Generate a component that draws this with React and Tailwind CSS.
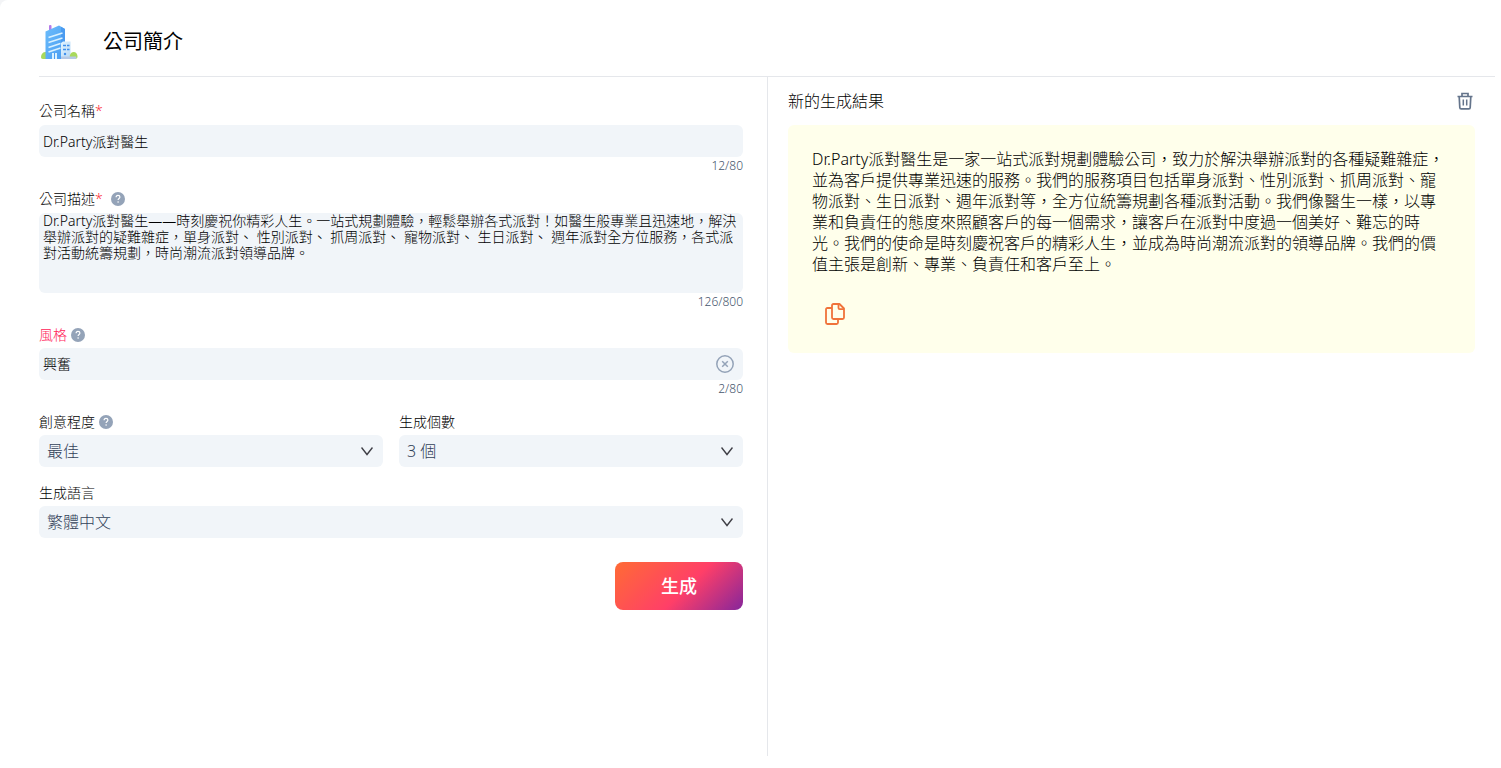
import { useState } from 'react'

const RESULT =
  'Dr.Party派對醫生是一家一站式派對規劃體驗公司，致力於解決舉辦派對的各種疑難雜症，並為客戶提供專業迅速的服務。我們的服務項目包括單身派對、性別派對、抓周派對、寵物派對、生日派對、週年派對等，全方位統籌規劃各種派對活動。我們像醫生一樣，以專業和負責任的態度來照顧客戶的每一個需求，讓客戶在派對中度過一個美好、難忘的時光。我們的使命是時刻慶祝客戶的精彩人生，並成為時尚潮流派對的領導品牌。我們的價值主張是創新、專業、負責任和客戶至上。'

const DESCRIPTION =
  'Dr.Party派對醫生——時刻慶祝你精彩人生。一站式規劃體驗，輕鬆舉辦各式派對！如醫生般專業且迅速地，解決舉辦派對的疑難雜症，單身派對、 性別派對、 抓周派對、 寵物派對、 生日派對、 週年派對全方位服務，各式派對活動統籌規劃，時尚潮流派對領導品牌。'

function BuildingIcon() {
  return (
    <svg width="40" height="40" viewBox="0 0 40 40" aria-hidden="true">
      <defs>
        <linearGradient id="tower" x1="0" y1="0" x2="1" y2="1">
          <stop offset="0" stopColor="#6bbcfb" />
          <stop offset="1" stopColor="#4a9df2" />
        </linearGradient>
        <linearGradient id="annex" x1="0" y1="0" x2="1" y2="1">
          <stop offset="0" stopColor="#e3f4ff" />
          <stop offset="1" stopColor="#b5d7f5" />
        </linearGradient>
      </defs>
      <rect x="10" y="3" width="2.5" height="6" rx="1" fill="#b57be8" />
      <path d="M2 35c0-3 2-5 4.500-5S10 32 10 37H4c-1.500 0-2-1-2-2z" fill="#a9d95b" />
      <path d="M6.500 9.500 20 3.500 26 7v30H6.500z" fill="url(#tower)" />
      <path d="M22 4.700 26 7v30h-4z" fill="#4a9bf0" />
      <path d="M9.500 15.500l14-4.500M9.500 20.500l14-4.500M9.500 25.500l12-4M9.500 30l12-4" stroke="#d9f1ff" strokeWidth="1.600" />
      <path d="M13 37v-6h5v6z" fill="#d9f1ff" />
      <path d="M15.500 31v6" stroke="#4a9df2" />
      <path d="M22 21l2-1.500h7.500V37H22z" fill="url(#annex)" />
      <path d="M24 23.500h3M28 23.500h2.500M24 27.500h3M28 27.500h2.500" stroke="#3f8fec" strokeWidth="1.600" />
      <circle cx="26" cy="32" r="1.200" fill="#3f8fec" />
      <path d="M31 37c-1-4 1-7 3.500-7 2.500 0 4 2 4 4.500 0 1.500-.8 2.500-2.500 2.500z" fill="#a9d95b" />
      <path d="M22 34.500h14.500c1.500 0 1 2.500-.5 2.500H22z" fill="#b5c9e6" />
    </svg>
  )
}

function HelpIcon() {
  return (
    <svg width="14" height="14" viewBox="0 0 14 14" fill="none" aria-hidden="true">
      <circle cx="7" cy="7" r="7" fill="#94a3b8" />
      <path d="M5.100 5.300c0-1.200.8-1.900 1.900-1.900s1.900.7 1.900 1.700c0 1.300-1.800 1.400-1.800 2.900" stroke="#fff" strokeWidth="1.200" />
      <circle cx="7.100" cy="10" r=".8" fill="#fff" />
    </svg>
  )
}

function ClearIcon() {
  return (
    <svg width="18" height="18" viewBox="0 0 18 18" fill="none" stroke="#94a3b8" aria-hidden="true">
      <circle cx="9" cy="9" r="8.200" strokeWidth="1.500" />
      <path d="M6.200 6.200l5.600 5.600M11.800 6.200l-5.600 5.600" strokeWidth="1.500" />
    </svg>
  )
}

function TrashIcon() {
  return (
    <svg width="16" height="18" viewBox="0 0 16 18" fill="none" stroke="#64748b" strokeWidth="1.700" aria-hidden="true">
      <path d="M.5 4.500h15M5 4.500v-3h6v3" />
      <path d="M2.200 4.500l.6 11c0 .9.5 1.400 1.400 1.400h7.600c.9 0 1.400-.5 1.400-1.400l.6-11" />
      <path d="M6.300 7.500v6M9.700 7.500v6" strokeWidth="1.500" />
    </svg>
  )
}

function CopyIcon() {
  return (
    <svg width="20" height="22" viewBox="0 0 20 22" fill="none" stroke="#f0733a" strokeWidth="1.800" strokeLinejoin="round" aria-hidden="true">
      <path d="M14.500 1H8.500C7.500 1 7 1.500 7 2.500v12c0 1 .5 1.500 1.500 1.500h9c1 0 1.500-.5 1.500-1.500v-9z" />
      <path d="M13.500 1v4c0 .8.400 1.200 1.200 1.200H19" />
      <path d="M7 5H2.500C1.500 5 1 5.500 1 6.500v13c0 1 .5 1.500 1.500 1.500h9c1 0 1.500-.5 1.500-1.500V16" />
    </svg>
  )
}

function FieldLabel({ htmlFor, required, help, className = 'h-[23px] text-black', children }) {
  return (
    <div className={`flex items-center gap-1 pb-1 text-sm ${className}`}>
      <label htmlFor={htmlFor}>
        {children}
        {required && <span className="text-red-500">*</span>}
      </label>
      {help && (
        <button type="button" aria-label="說明" className={required ? 'ml-1' : ''}>
          <HelpIcon />
        </button>
      )}
    </div>
  )
}

function Counter({ value, max }) {
  return (
    <p className="h-4 text-right text-xs leading-[18px] text-slate-600">
      {value}/{max}
    </p>
  )
}

function SelectField({ id, label, help, options }) {
  return (
    <div>
      <FieldLabel htmlFor={id} help={help}>{label}</FieldLabel>
      <div className="relative">
        <select id={id} className="block h-8 w-full appearance-none rounded-md bg-slate-100 px-2 text-base text-slate-700">
          {options.map((option) => (
            <option key={option}>{option}</option>
          ))}
        </select>
        <svg className="pointer-events-none absolute top-3 right-[10px]" width="12" height="9" viewBox="0 0 12 9" fill="none" stroke="#3f3f46" strokeWidth="1.400" aria-hidden="true">
          <path d="M.5.500 6 7.500 11.500.500" />
        </svg>
      </div>
    </div>
  )
}

export default function App() {
  const [name, setName] = useState('Dr.Party派對醫生')
  const [description, setDescription] = useState(DESCRIPTION)
  const [style, setStyle] = useState('興奮')

  return (
    <div className="bg-gray-100 font-['Noto_Sans','Noto_Sans_CJK_TC',sans-serif]" lang="zh-Hant">
      <div className="flex min-h-screen flex-col rounded-tl-lg bg-white pr-[6px] pb-3 pl-[39px] font-light">
        <header className="flex h-[77px] items-center gap-6 border-b border-gray-200 pt-2 text-black">
          <BuildingIcon />
          <h1 className="text-xl font-normal">公司簡介</h1>
        </header>

        <main className="grid flex-1 grid-cols-2">
          {/* Form */}
          <form className="flex flex-col gap-4 pt-6 pr-6" onSubmit={(e) => e.preventDefault()}>
            <div>
              <FieldLabel htmlFor="name" required className="h-6 text-black">公司名稱</FieldLabel>
              <input
                id="name"
                className="block h-8 w-full rounded-md bg-slate-100 px-1 text-sm text-black"
                value={name}
                onChange={(e) => setName(e.target.value)}
              />
              <Counter value={12} max={80} />
            </div>

            <div>
              <FieldLabel htmlFor="description" required help className="h-6 text-black">公司描述</FieldLabel>
              <textarea
                id="description"
                className="block h-20 w-full resize-none rounded-md bg-slate-100 px-1 text-sm leading-4 text-black"
                value={description}
                onChange={(e) => setDescription(e.target.value)}
              />
              <Counter value={126} max={800} />
            </div>

            <div>
              <FieldLabel htmlFor="style" help className="h-[23px] text-rose-500">風格</FieldLabel>
              <div className="flex h-8 items-center rounded-md bg-slate-100 pr-[9px] pl-1">
                <input
                  id="style"
                  className="min-w-0 flex-1 text-sm text-black"
                  value={style}
                  onChange={(e) => setStyle(e.target.value)}
                />
                <button type="button" aria-label="清除" onClick={() => setStyle('')}>
                  <ClearIcon />
                </button>
              </div>
              <Counter value={style.length} max={80} />
            </div>

            <div className="grid grid-cols-2 gap-4">
              <SelectField id="creativity" label="創意程度" help options={['最佳', '高', '低']} />
              <SelectField id="count" label="生成個數" options={['3 個', '2 個', '1 個']} />
            </div>

            <SelectField id="language" label="生成語言" options={['繁體中文', 'English']} />

            <button
              type="submit"
              className="mt-2 h-12 w-32 self-end rounded-lg bg-[linear-gradient(135deg,#ff6b35_0%,#ff3f68_55%,#86269b_100%)] text-lg font-medium text-white"
            >
              生成
            </button>
          </form>

          {/* Results */}
          <section className="border-l border-gray-200 px-5">
            <div className="flex h-12 items-center justify-between pr-[2px]">
              <h2 className="text-base font-light text-black">新的生成結果</h2>
              <button type="button" aria-label="刪除">
                <TrashIcon />
              </button>
            </div>
            <article className="rounded-md bg-[#ffffeb] p-6">
              <p className="text-base leading-[21px] text-black">{RESULT}</p>
              <button type="button" aria-label="複製" className="mt-7 mb-1 ml-[13px] block">
                <CopyIcon />
              </button>
            </article>
          </section>
        </main>
      </div>
    </div>
  )
}
